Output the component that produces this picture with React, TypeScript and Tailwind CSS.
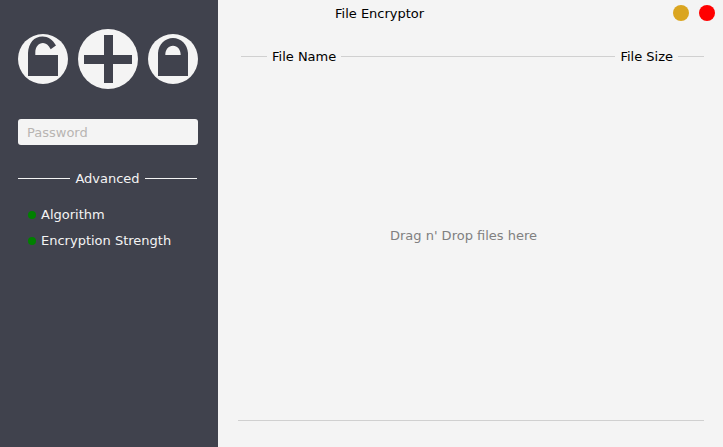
import { useState } from "react";

function UnlockIcon() {
  return (
    <svg viewBox="0 0 50 50" className="size-[50px]" aria-hidden="true">
      <circle cx="25" cy="25" r="25" fill="#f4f4f4" />
      <path
        d="M10 42V19C10.500 9 16 2.500 24.500 2.500C30 2.500 34.500 5.500 38 11.500L32.700 15.200C30.500 11 28 9 25 9C20.500 9 17.300 13 17.300 18.500V21H40V42Z"
        fill="#40424d"
      />
    </svg>
  );
}

function PlusIcon() {
  return (
    <svg viewBox="0 0 60 60" className="size-[60px]" aria-hidden="true">
      <circle cx="30" cy="30" r="30" fill="#f4f4f4" />
      <path d="M26 6H35V26H54V35H35V54H26V35H6V26H26Z" fill="#40424d" />
    </svg>
  );
}

function LockIcon() {
  return (
    <svg viewBox="0 0 50 50" className="size-[50px]" aria-hidden="true">
      <circle cx="25" cy="25" r="25" fill="#f4f4f4" />
      <path
        d="M10 42V19C10.500 10.500 17 4 25 4S39.500 10.500 40 19V42ZM17.300 21H32.700C32.700 15.500 29.500 11.700 25 11.700S17.300 15.500 17.300 21Z"
        fill="#40424d"
        fillRule="evenodd"
      />
    </svg>
  );
}

function Option({ label }: { label: string }) {
  return (
    <li>
      <button type="button" className="flex items-center gap-[5px]">
        <span className="size-2 rounded-full bg-[#008000]" />
        {label}
      </button>
    </li>
  );
}

export default function App() {
  const [password, setPassword] = useState("");

  return (
    <div className="flex min-h-screen bg-[#f4f4f4] font-['DejaVu_Sans',sans-serif] text-[13px] leading-[17px] text-black">
      <aside className="w-[218px] shrink-0 bg-[#40424d] pt-[29px] pr-[21px] pl-[18px] text-[#f4f4f4]">
        <div className="flex items-center gap-[10px]">
          <button type="button" aria-label="Decrypt" className="shrink-0 rounded-full">
            <UnlockIcon />
          </button>
          <button type="button" aria-label="Add files" className="shrink-0 rounded-full">
            <PlusIcon />
          </button>
          <button type="button" aria-label="Encrypt" className="shrink-0 rounded-full">
            <LockIcon />
          </button>
        </div>

        <input
          type="password"
          aria-label="Password"
          placeholder="Password"
          value={password}
          onChange={(e) => setPassword(e.target.value)}
          className="mt-[30px] block h-[26px] w-[180px] rounded-[3px] bg-[#f4f4f4] px-[9px] text-black outline-none placeholder:text-[#b8b5b2]"
        />

        <div className="mt-[25px] flex items-center gap-[5px]">
          <span className="h-px flex-1 bg-[#f4f4f4]" />
          <h2>Advanced</h2>
          <span className="h-px flex-1 bg-[#f4f4f4]" />
        </div>

        <ul className="mt-[19px] flex flex-col gap-[9px] pl-[10px]">
          <Option label="Algorithm" />
          <Option label="Encryption Strength" />
        </ul>
      </aside>

      <main className="flex min-w-0 flex-1 flex-col">
        <header className="flex h-[26px] items-center gap-[10px] pr-2">
          <h1 className="flex-1 pl-[117px]">File Encryptor</h1>
          <button type="button" aria-label="Minimize" className="size-4 rounded-full bg-[#daa520]" />
          <button type="button" aria-label="Close" className="size-4 rounded-full bg-[#ff0000]" />
        </header>

        <div className="mt-[22px] flex items-center gap-[5px] pr-[19px] pl-[23px]">
          <span className="h-px w-[26px] bg-[#d0d0d0]" />
          <span>File Name</span>
          <span className="h-px flex-1 bg-[#d0d0d0]" />
          <span>File Size</span>
          <span className="h-px w-[26px] bg-[#d0d0d0]" />
        </div>

        <section className="flex flex-1 items-center justify-center pr-[14px] pb-[14px] text-[#808080]">
          <p>Drag n' Drop files here</p>
        </section>

        <hr className="mr-[19px] mb-[26px] ml-5 border-[#d0d0d0]" />
      </main>
    </div>
  );
}
